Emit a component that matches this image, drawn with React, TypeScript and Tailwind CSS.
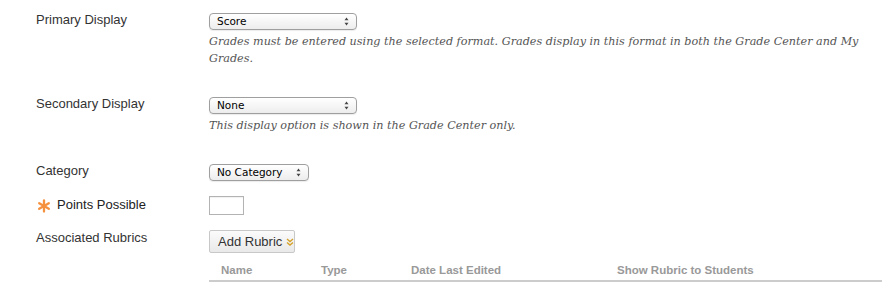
import React from "react";

function SelectBox({ label, width }: { label: string; width: string }) {
  return (
    <div
      className={`${width} h-[17px] mt-[1px] flex items-center justify-between rounded-[4px] border border-[#9f9f9f] bg-gradient-to-b from-white to-[#ededed] pl-[7px] pr-[7px] shadow-[0_1px_1px_rgba(0,0,0,0.08)]`}
    >
      <span className="font-['DejaVu_Sans',sans-serif] text-[10.5px] leading-[15px] text-black">{label}</span>
      <svg width="5" height="9" viewBox="0 0 5 9" className="shrink-0">
        <path d="M2.5 0.5 L4.5 3.3 L0.5 3.3 Z" fill="#444" />
        <path d="M2.5 8.5 L4.5 5.7 L0.5 5.7 Z" fill="#444" />
      </svg>
    </div>
  );
}

function Label({ children }: { children: React.ReactNode }) {
  return (
    <div className="w-[173px] shrink-0 text-[13px] leading-[16px] text-[#333]">{children}</div>
  );
}

function Desc({ children }: { children: React.ReactNode }) {
  return (
    <p className="mt-[3px] w-[665px] font-['DejaVu_Serif',serif] italic text-[11.2px] leading-[17px] text-[#555]">
      {children}
    </p>
  );
}

export default function App() {
  return (
    <div className="w-[882px] h-[293px] bg-white overflow-hidden font-['Liberation_Sans',Arial,sans-serif]">
      <div className="pl-[36px] pt-[12px]">
        <div className="flex">
          <Label>Primary Display</Label>
          <div>
            <SelectBox label="Score" width="w-[148px]" />
            <Desc>
              Grades must be entered using the selected format. Grades display in this format in both the Grade Center
              and My Grades.
            </Desc>
          </div>
        </div>

        <div className="flex mt-[29px]">
          <Label>Secondary Display</Label>
          <div>
            <SelectBox label="None" width="w-[148px]" />
            <Desc>This display option is shown in the Grade Center only.</Desc>
          </div>
        </div>

        <div className="flex mt-[29px]">
          <Label>Category</Label>
          <div>
            <SelectBox label="No Category" width="w-[100px]" />
          </div>
        </div>

        <div className="flex mt-[15px]">
          <div className="w-[173px] shrink-0 flex items-center text-[13px] leading-[16px] text-[#222]">
            <svg width="14" height="14" viewBox="0 0 14 14" className="ml-[1px] mr-[6px]">
              <g stroke="#f5913e" strokeWidth="2.3" strokeLinecap="round">
                <line x1="7" y1="1.5" x2="7" y2="12.5" />
                <line x1="2.2" y1="4.2" x2="11.8" y2="9.8" />
                <line x1="2.2" y1="9.8" x2="11.8" y2="4.2" />
              </g>
            </svg>
            <span className="-mt-[2px]">Points Possible</span>
          </div>
          <div className="w-[35px] h-[19px] border border-[#b3b3b3] bg-white shadow-[inset_0_1px_1px_rgba(0,0,0,0.06)]" />
        </div>

        <div className="flex mt-[15px]">
          <Label>Associated Rubrics</Label>
          <div className="w-[86px] h-[23px] shrink-0 whitespace-nowrap flex items-center rounded-[2px] border border-[#c8c8c8] bg-gradient-to-b from-[#fbfbfb] to-[#e9e9e9] pl-[8px] text-[13px] leading-[16px] text-[#333]">
            <span>Add Rubric</span>
            <svg width="8" height="8" viewBox="0 0 8 8" className="ml-[4px] shrink-0">
              <g fill="none" stroke="#d4a22b" strokeWidth="1.4">
                <path d="M1 1 L4 3.5 L7 1" />
                <path d="M1 4.5 L4 7 L7 4.5" />
              </g>
            </svg>
          </div>
        </div>

        <div className="ml-[173px] mt-[9px] border-b-2 border-[#cccccc]">
          <div className="flex h-[18px] pb-[2px] pl-[12px] text-[11.5px] leading-[16px] font-bold text-[#999]">
            <div className="w-[100px]">Name</div>
            <div className="w-[90px]">Type</div>
            <div className="w-[206px]">Date Last Edited</div>
            <div>Show Rubric to Students</div>
          </div>
        </div>
      </div>
    </div>
  );
}
